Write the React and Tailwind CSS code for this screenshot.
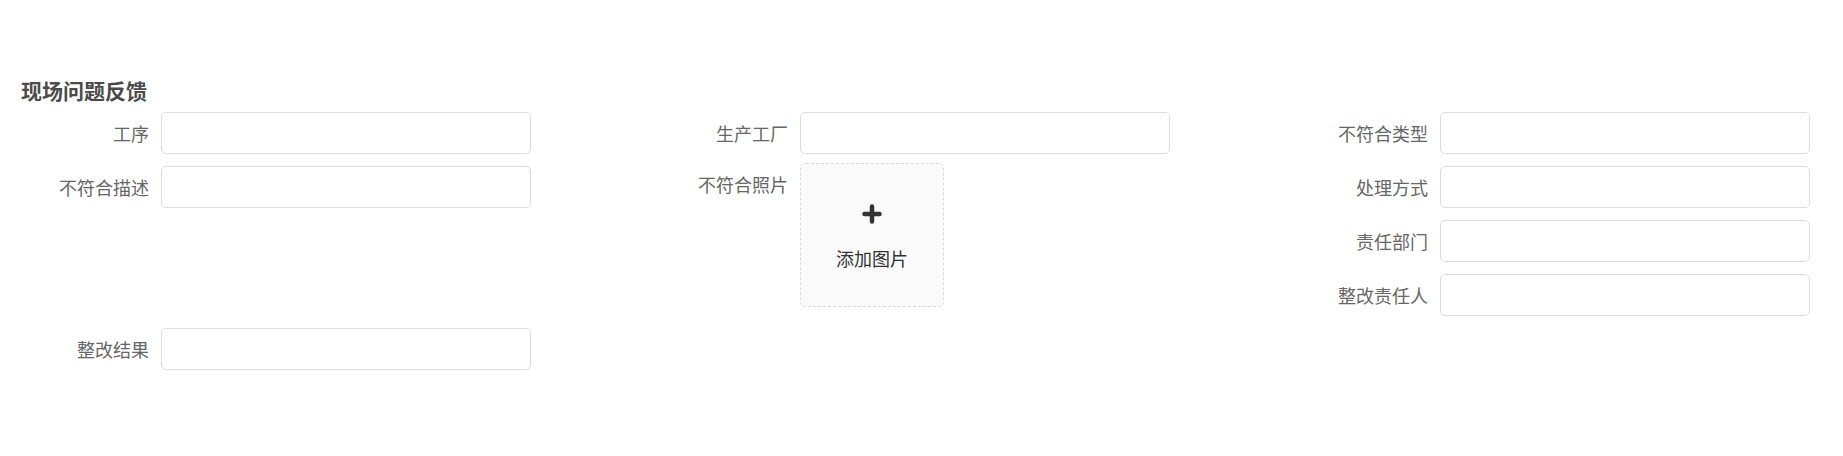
const font = { fontFamily: '"Noto Sans CJK SC", "Noto Sans", sans-serif' };

const Field = ({ label, className = 'mb-[12px]' }) => (
  <div className={`flex items-center ${className}`}>
    <label className="w-[128px] shrink-0 text-right text-[18px] leading-[42px] text-[#666666]">
      {label}
    </label>
    <input
      type="text"
      className="ml-[12px] h-[42px] w-[370px] rounded-[5px] border border-[#dcdcdc] bg-white px-3 text-[16px] outline-none"
    />
  </div>
);

const PlusIcon = () => (
  <svg width="20" height="20" viewBox="0 0 20 20" className="block">
    <path d="M2.5 10h15M10 2.5v15" stroke="#333333" strokeWidth="4.5" strokeLinecap="round" />
  </svg>
);

const PhotoField = () => (
  <div className="flex items-start">
    <label className="w-[128px] shrink-0 text-right text-[18px] leading-[42px] text-[#666666]">
      不符合照片
    </label>
    <div className="ml-[12px] flex h-[144px] w-[144px] cursor-pointer flex-col items-center rounded-[6px] border border-dashed border-[#d9d9d9] bg-[#fafafa] pt-[40px]">
      <PlusIcon />
      <span className="mt-[22px] text-[18px] leading-[24px] text-[#333333]">添加图片</span>
    </div>
  </div>
);

const App = () => {
  return (
    <div className="min-h-[456px] w-full overflow-hidden bg-white pl-[21px] pt-[75px]" style={font}>
      <h2 className="mb-[7px] text-[21px] font-bold leading-[30px] text-[#4a4a4a]">现场问题反馈</h2>

      <div className="flex items-start">
        <div className="w-[639px] shrink-0">
          <Field label="工序" />
          <Field label="不符合描述" />
        </div>
        <div className="w-[640px] shrink-0">
          <Field label="生产工厂" className="mb-[9px]" />
          <PhotoField />
        </div>
        <div className="flex-1">
          <Field label="不符合类型" />
          <Field label="处理方式" />
          <Field label="责任部门" />
          <Field label="整改责任人" />
        </div>
      </div>

      <Field label="整改结果" />
    </div>
  );
};

export default App;
